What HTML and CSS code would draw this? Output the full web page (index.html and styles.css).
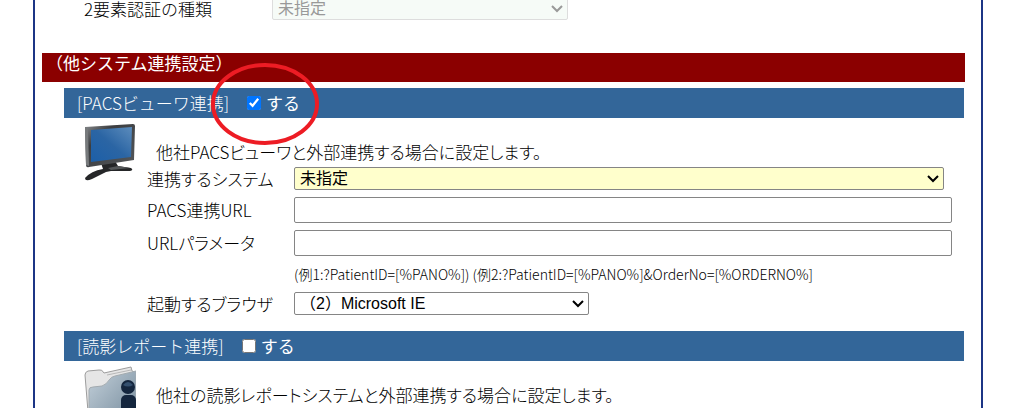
FILE: index.html
```html
<!DOCTYPE html>
<html lang="ja">
<head>
  <meta charset="UTF-8">
  <meta name="viewport" content="width=device-width, initial-scale=1.0">
  <title>他システム連携設定</title>
  <link rel="stylesheet" href="styles.css">
</head>
<body>
  <main class="frame">
    <div class="auth-row">
      <label for="authType">2要素認証の種類</label>
      <select id="authType" disabled>
        <option>未指定</option>
      </select>
    </div>

    <h1>（他システム連携設定）</h1>

    <section class="panel">
      <div class="panel-head">
        <h2>[PACSビューワ連携]</h2>
        <label class="toggle"><input type="checkbox" id="usePacs" checked>する</label>
        <svg class="mark" viewBox="0 0 110 86" aria-hidden="true">
          <ellipse cx="55" cy="43" rx="52" ry="39" fill="none" stroke="#ed1c24" stroke-width="4"/>
        </svg>
      </div>
      <div class="panel-body">
        <svg class="icon" viewBox="0 0 52 60" aria-hidden="true">
          <defs>
            <linearGradient id="screen" x1="0" y1="1" x2="1" y2="0">
              <stop offset="0" stop-color="#1c5fa8"/>
              <stop offset="0.5" stop-color="#2b65a4"/>
              <stop offset="1" stop-color="#5c8cbc"/>
            </linearGradient>
            <linearGradient id="bezel" x1="0" y1="0" x2="1" y2="1">
              <stop offset="0" stop-color="#8a8d90"/>
              <stop offset="0.3" stop-color="#3c3e41"/>
              <stop offset="1" stop-color="#55585b"/>
            </linearGradient>
          </defs>
          <path d="M17 40 L31 38 L34 43 L47 45 Q50 47 46 48 L27 48 L22 49 L8 56 Q1 59 1 55 Q7 48 19 46 Z" fill="#252628"/>
          <path d="M24 45 L34 43 L46 45 L27 47 Z" fill="#55585a"/>
          <path d="M1 4 L49 1 Q51 1 51 3 L50 37 L5 44 Q2 45 2 42 Z" fill="url(#bezel)"/>
          <path d="M1 4 L4 5 L5 43 L2 42 Z" fill="#777a7c"/>
          <path d="M7 7 L48 4 L47 34 L7 39 Z" fill="url(#screen)"/>
        </svg>
        <div class="panel-main">
          <p class="lead">他社PACSビューワと外部連携する場合に設定します。</p>
          <div class="fields">
            <label for="pacsSystem">連携するシステム</label>
            <select id="pacsSystem" class="required">
              <option>未指定</option>
            </select>

            <label for="pacsUrl">PACS連携URL</label>
            <input type="text" id="pacsUrl">

            <label for="urlParam">URLパラメータ</label>
            <input type="text" id="urlParam">

            <p class="hint">(例1:?PatientID=[%PANO%]) (例2:?PatientID=[%PANO%]&amp;OrderNo=[%ORDERNO%]</p>

            <label for="browser">起動するブラウザ</label>
            <select id="browser" class="browser">
              <option>（2）Microsoft IE</option>
            </select>
          </div>
        </div>
      </div>
    </section>

    <section class="panel">
      <div class="panel-head">
        <h2>[読影レポート連携]</h2>
        <label class="toggle"><input type="checkbox" id="useReport">する</label>
      </div>
      <div class="panel-body">
        <svg class="icon" viewBox="0 0 52 60" aria-hidden="true">
          <defs>
            <linearGradient id="folder" x1="0" y1="0" x2="1" y2="1">
              <stop offset="0" stop-color="#c3d0da"/>
              <stop offset="1" stop-color="#73899a"/>
            </linearGradient>
          </defs>
          <path d="M1 9 Q1 6 4 5 L15 4 Q18 3 20 7 L47 1 L48 5 L51 6 L51 54 L5 58 Z" fill="#e6e6e6" stroke="#9d9d9d"/>
          <path d="M23 9 L47 4" stroke="#b8b8b8"/>
          <path d="M5 24 Q5 21 9 21 L18 20 Q22 19 26 13 Q27 11 31 10 L52 5 L52 55 L5 59 Z" fill="url(#folder)" stroke="#a3abb0"/>
          <rect x="37" y="29" width="15" height="24" rx="5" fill="#14263e"/>
          <circle cx="44" cy="21" r="7" fill="#14263e"/>
          <path d="M39 19 Q44 13 49 19 Q44 22 39 19 Z" fill="#34506f"/>
        </svg>
        <div class="panel-main">
          <p class="lead">他社の読影レポートシステムと外部連携する場合に設定します。</p>
        </div>
      </div>
    </section>
  </main>
</body>
</html>
```
FILE: styles.css
```css
* {
  box-sizing: border-box;
}

body {
  margin: 0;
  overflow: hidden;
  background: #fff;
  color: #000;
  font-family: "Noto Sans CJK JP", sans-serif;
  font-size: 17px;
  font-weight: 300;
  line-height: 22px;
}

h1, h2, p {
  margin: 0;
  font-size: 17px;
  font-weight: 300;
}

select, input[type="text"] {
  width: 100%;
  margin: 0;
  border: 1px solid #858585;
  border-radius: 2px;
  background: #fff;
  color: #000;
  font-family: "Liberation Sans", "Noto Sans CJK JP", sans-serif;
  font-size: 16px;
}

select {
  height: 23px;
  padding: 0 24px 0 5px;
  appearance: none;
  background: #fff url("data:image/svg+xml,%3Csvg xmlns='http://www.w3.org/2000/svg' width='12' height='8'%3E%3Cpath d='M1 1 L6 6 L11 1' fill='none' stroke='%23000' stroke-width='2'/%3E%3C/svg%3E") no-repeat right 4px center;
}

input[type="text"] {
  height: 26px;
}

.frame {
  min-height: 100vh;
  margin: 0 41px 0 33px;
  padding: 0 16px 0 7px;
  border: solid #1c3585;
  border-width: 0 2px;
}

.auth-row {
  display: grid;
  grid-template-columns: 188px 296px;
  align-items: center;
  margin: -3px 0 33px 42px;
}

.auth-row select {
  border-color: #ddd;
  background-color: #f6fbf7;
  background-image: url("data:image/svg+xml,%3Csvg xmlns='http://www.w3.org/2000/svg' width='12' height='8'%3E%3Cpath d='M1 1 L6 6 L11 1' fill='none' stroke='%23999' stroke-width='2'/%3E%3C/svg%3E");
  color: #999;
  opacity: 1;
}

h1 {
  height: 29px;
  padding-left: 4px;
  background: #8b0000;
  color: #fff;
  font-weight: 400;
  line-height: 20px;
  font-size: 17px;
}

.panel {
  margin: 6px 1px 0 22px;
}

.panel + .panel {
  margin-top: 16px;
}

.panel-head {
  position: relative;
  display: flex;
  gap: 18px;
  align-items: center;
  height: 30px;
  padding-left: 13px;
  background: #336699;
  color: #fff;
}

.toggle {
  display: flex;
  gap: 5px;
  align-items: center;
  font-weight: 400;
}

.toggle input {
  width: 14px;
  height: 14px;
  margin: 0;
}

.mark {
  position: absolute;
  top: -27px;
  left: 146px;
  width: 110px;
  height: 86px;
}

.panel-body {
  display: flex;
  gap: 11px;
  padding: 5px 12px 0 20px;
  font-feature-settings: "palt";
}

.icon {
  flex: none;
  width: 52px;
  height: 60px;
}

.panel-main {
  flex: 1;
}

.lead {
  padding: 18px 0 4px 9px;
}

.fields {
  display: grid;
  grid-template-columns: 147px 1fr;
  row-gap: 7px;
  align-items: center;
}

.fields .required {
  width: calc(100% - 8px);
  background-color: #ffffcc;
}

.fields .browser {
  width: 295px;
}

.hint {
  grid-column: 2;
  font-size: 14px;
}
```
